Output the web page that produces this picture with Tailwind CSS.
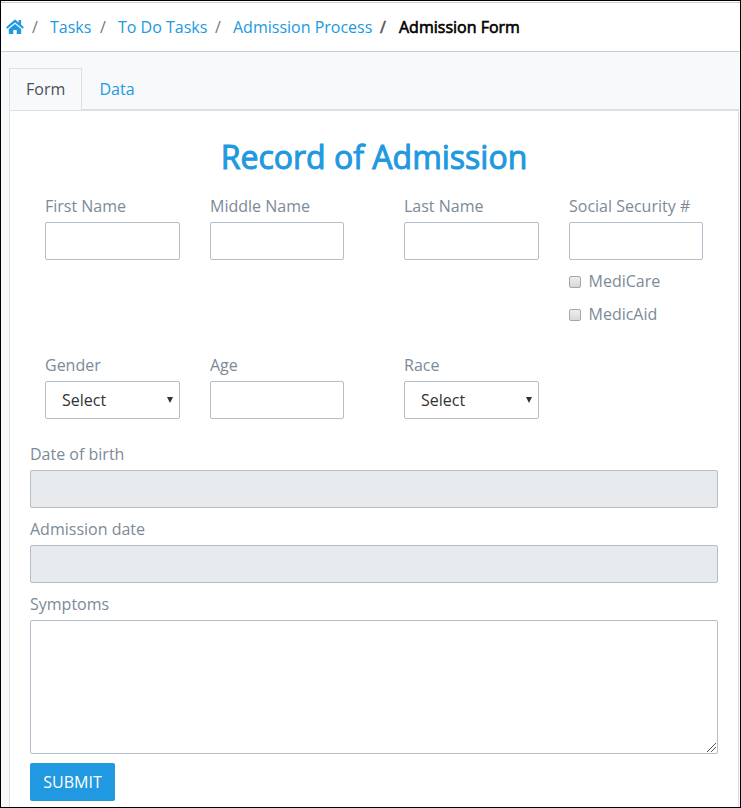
<!DOCTYPE html>
<html lang="en">
<head>
<meta charset="utf-8">
<title>Admission Form</title>
<script src="https://cdn.jsdelivr.net/npm/@tailwindcss/browser@4"></script>
</head>
<body class="h-[808px] w-[741px] overflow-hidden border border-black bg-[#f8f9fb] font-['Open_Sans',sans-serif] text-base leading-6 text-[#7c8a98]">
<nav class="mt-px flex h-[50px] items-center border-y border-[#cccccc] bg-white pl-[5px] text-[#2199e0] shadow-[0_-1px_0_white]">
  <a class="w-[26px]"><svg class="mb-px block" width="18" height="15" viewBox="0 0 18 15" fill="#2199e0"><path d="M9 5.100 2.800 10.100v4.100c0 .4.3.8.8.8h3.700v-4h3.400v4h3.700c.5 0 .8-.4.800-.8v-4.100z"/><path d="M.1 8.300 7.900 1.200c.7-.6 1.500-.6 2.200 0L12.600 3.500V1.100h2.500v4.700l2.800 2.500-1.200 1.500L9 3.400 1.300 9.800z"/></svg></a>
  <span class="w-[18px] text-[#777]">/</span><a class="w-[50px] whitespace-nowrap">Tasks</a>
  <span class="w-[18px] text-[#777]">/</span><a class="w-[97px] whitespace-nowrap">To Do Tasks</a>
  <span class="w-[18px] text-[#777]">/</span><a class="w-[147px] whitespace-nowrap">Admission Process</a>
  <span class="w-[19px] text-[#555] [-webkit-text-stroke:0.6px_#555]">/</span><span class="whitespace-nowrap text-black [-webkit-text-stroke:0.6px_black]">Admission Form</span>
</nav>
<div class="mt-4 mr-px ml-2 flex h-[42px]">
  <div class="h-[42px] w-[73px] border border-b-0 border-[#dddfe3] pt-2 pl-4 text-[#495057]">Form</div>
  <div class="h-[42px] flex-1 border-b border-[#dddfe3] pt-[9px] pl-[17.500px] text-[#2199e0]">Data</div>
</div>
<main class="ml-2 h-[698px] w-[730px] border border-[#dddfe3] bg-white px-5">
  <h1 class="h-[72px] pt-[21px] text-center text-[32px] leading-[50px] text-[#2199e0] [-webkit-text-stroke:1px_#2199e0]">Record of Admission</h1>
  <section class="ml-[15px] grid h-[159px] grid-cols-[135px_134px_135px_134px] gap-x-[30px] pt-[11px] [&>*:nth-child(n+3)]:translate-x-[30px]">
    <div>First Name<div class="mt-1 h-[38px] rounded-[2px] border border-[#b3bec8]"></div></div>
    <div>Middle Name<div class="mt-1 h-[38px] rounded-[2px] border border-[#b3bec8]"></div></div>
    <div>Last Name<div class="mt-1 h-[38px] rounded-[2px] border border-[#b3bec8]"></div></div>
    <div>Social Security #<div class="mt-1 h-[38px] rounded-[2px] border border-[#b3bec8]"></div>
      <label class="mt-[9px] flex items-center gap-[7.500px]"><span class="mt-0.5 h-3 w-3 rounded-[2px] border border-[#a6a6a6] bg-linear-to-b from-[#eeeeee] to-[#d8d8d8]"></span>MediCare</label>
      <label class="mt-[9px] flex items-center gap-[7.500px]"><span class="mt-0.5 h-3 w-3 rounded-[2px] border border-[#a6a6a6] bg-linear-to-b from-[#eeeeee] to-[#d8d8d8]"></span>MedicAid</label>
    </div>
  </section>
  <section class="ml-[15px] grid h-[100px] grid-cols-[135px_134px_135px] gap-x-[30px] pt-[11px] [&>*:nth-child(n+3)]:translate-x-[30px]">
    <div>Gender<div class="mt-1 flex h-[38px] items-center justify-between rounded-[2px] border border-[#b3bec8] pr-[6px] pl-4 text-[#333]">Select<svg width="6" height="6"><path d="M0 0h6L3 6z" fill="#333"/></svg></div></div>
    <div>Age<div class="mt-1 h-[38px] rounded-[2px] border border-[#b3bec8]"></div></div>
    <div>Race<div class="mt-1 flex h-[38px] items-center justify-between rounded-[2px] border border-[#b3bec8] pr-[6px] pl-4 text-[#333]">Select<svg width="6" height="6"><path d="M0 0h6L3 6z" fill="#333"/></svg></div></div>
  </section>
  <div class="h-[75px]">Date of birth<div class="mt-1 h-[38px] rounded-[2px] border border-[#b3bec8] bg-[#e8ebee]"></div></div>
  <div class="h-[75px]">Admission date<div class="mt-1 h-[38px] rounded-[2px] border border-[#b3bec8] bg-[#e8ebee]"></div></div>
  <div>Symptoms<div class="mt-1 flex h-[134px] items-end justify-end rounded-[2px] border border-[#b3bec8] p-px"><svg width="9" height="9" shape-rendering="crispEdges" fill="#555"><path d="M0 8h1v1H0zM1 7h1v1H1zM2 6h1v1H2zM3 5h1v1H3zM4 4h1v1H4zM5 3h1v1H5zM6 2h1v1H6zM7 1h1v1H7zM8 0h1v1H8zM4 8h1v1H4zM5 7h1v1H5zM6 6h1v1H6zM7 5h1v1H7zM8 4h1v1H8z"/></svg></div></div>
  <button class="mt-[9px] block h-[38px] w-[85px] rounded-[2px] bg-[#2199e0] text-white">SUBMIT</button>
</main>
</body>
</html>
